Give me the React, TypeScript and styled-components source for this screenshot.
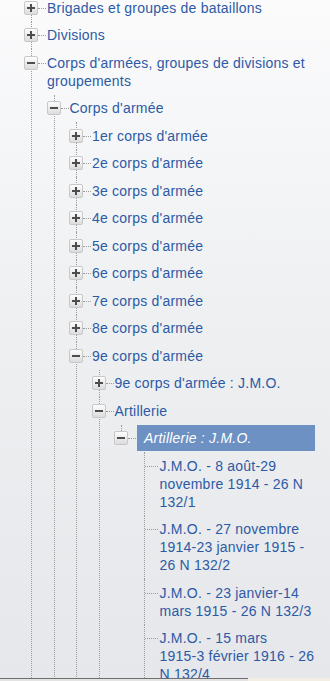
import React from 'react';
import styled, { createGlobalStyle } from 'styled-components';

type TreeNode = {
  label: string;
  open?: boolean;
  leaf?: boolean;
  selected?: boolean;
  last?: boolean;
  children?: TreeNode[];
};

const GlobalStyle = createGlobalStyle`
  html, body {
    margin: 0;
    padding: 0;
  }
  body {
    font-family: 'Liberation Sans', Arial, sans-serif;
  }
`;

const Page = styled.div`
  width: 330px;
  height: 681px;
  display: flex;
  flex-direction: column;
  overflow: hidden;
  background: linear-gradient(to bottom, #fbfbfc 0%, #eef0f2 45%, #e5e7ea 100%);
`;

const Scroller = styled.div`
  flex: 1;
  overflow: hidden;
  padding: 0 15px 0 0;
`;

const List = styled.ul<{ $indent: number; $offset?: number }>`
  list-style: none;
  margin: ${(p) => p.$offset || 0}px 0 0 0;
  padding: 0 0 0 ${(p) => p.$indent}px;
`;

const Item = styled.li<{ $last?: boolean }>`
  position: relative;
  &::before {
    content: '';
    position: absolute;
    left: 7px;
    top: 0;
    ${(p) => (p.$last ? 'height: 12px;' : 'bottom: 0;')}
    border-left: 1px dotted #9c9c9c;
  }
`;

const Row = styled.div`
  display: flex;
  align-items: flex-start;
  padding: 4.75px 0;
`;

const Toggle = styled.span`
  position: relative;
  z-index: 1;
  flex: none;
  box-sizing: border-box;
  width: 14px;
  height: 14px;
  margin-top: 2px;
  border: 1px solid #c8c8c8;
  border-radius: 2px;
  background: linear-gradient(to bottom, #fdfdfd, #dcdcdc);
  display: flex;
  align-items: center;
  justify-content: center;
`;

const Connector = styled.span`
  flex: none;
  width: 8px;
  height: 0;
  margin: 9px 1px 0 0;
  border-top: 1px dotted #9c9c9c;
`;

const LeafStub = styled.span`
  flex: none;
  width: 13px;
  height: 0;
  margin: 9px 2px 0 8px;
  border-top: 1px dotted #9c9c9c;
`;

const Label = styled.span<{ $selected?: boolean }>`
  flex: 1;
  min-width: 0;
  font-size: 14px;
  letter-spacing: 0.22px;
  line-height: 18px;
  color: ${(p) => (p.$selected ? '#ffffff' : '#2d5aa5')};
  font-style: ${(p) => (p.$selected ? 'italic' : 'normal')};
  background: ${(p) => (p.$selected ? '#6d91c3' : 'transparent')};
  padding: ${(p) => (p.$selected ? '4px 7px' : '0')};
  margin: ${(p) => (p.$selected ? '-4px 0' : '0')};
`;

const Footer = styled.div`
  flex: none;
  height: 3px;
  display: flex;
`;

const FooterLeft = styled.div`
  width: 248px;
  border-top: 1px solid #6f6f6f;
  background: #e3e3e3;
`;

const FooterRight = styled.div`
  flex: 1;
  background: #f3eee4;
`;

const Sign: React.FC<{ open?: boolean }> = ({ open }) => (
  <svg width="10" height="10" viewBox="0 0 10 10">
    <rect x="1" y="4" width="8" height="2" fill="#4d4d4d" />
    {!open && <rect x="4" y="1" width="2" height="8" fill="#4d4d4d" />}
  </svg>
);

// hyphens joining two words (1915-3) don't break the line, as in the source
const keepHyphens = (s: string) => s.replace(/(\S)-(\S)/g, '$1\u2011$2');

const corps = ['1er', '2e', '3e', '4e', '5e', '6e', '7e', '8e'].map((n) => ({
  label: `${n} corps d'armée`,
}));

const tree: TreeNode[] = [
  { label: 'Brigades et groupes de bataillons' },
  { label: 'Divisions' },
  {
    label: "Corps d'armées, groupes de divisions et groupements",
    open: true,
    children: [
      {
        label: "Corps d'armée",
        open: true,
        children: [
          ...corps,
          {
            label: "9e corps d'armée",
            open: true,
            children: [
              { label: "9e corps d'armée : J.M.O." },
              {
                label: 'Artillerie',
                open: true,
                children: [
                  {
                    label: 'Artillerie : J.M.O.',
                    open: true,
                    selected: true,
                    last: true,
                    children: [
                      { label: 'J.M.O. - 8 août-29 novembre 1914 - 26 N 132/1', leaf: true },
                      { label: 'J.M.O. - 27 novembre 1914-23 janvier 1915 - 26 N 132/2', leaf: true },
                      { label: 'J.M.O. - 23 janvier-14 mars 1915 - 26 N 132/3', leaf: true },
                      { label: 'J.M.O. - 15 mars 1915-3 février 1916 - 26 N 132/4', leaf: true },
                      { label: 'J.M.O. - 4 février 1916-31 décembre 1916 - 26 N 132/5', leaf: true, last: true },
                    ],
                  },
                ],
              },
              { label: 'Génie', last: true },
            ],
          },
          { label: "10e corps d'armée", last: true },
        ],
      },
      { label: 'Groupes de divisions', last: true },
    ],
  },
  { label: 'Régiments', last: true },
];

const TreeItem: React.FC<{ node: TreeNode }> = ({ node }) => (
  <Item $last={node.last}>
    <Row>
      {node.leaf ? (
        <LeafStub />
      ) : (
        <>
          <Toggle>
            <Sign open={node.open} />
          </Toggle>
          <Connector />
        </>
      )}
      <Label $selected={node.selected}>{keepHyphens(node.label)}</Label>
    </Row>
    {node.open && node.children && (
      <List $indent={22.5}>
        {node.children.map((child) => (
          <TreeItem key={child.label} node={child} />
        ))}
      </List>
    )}
  </Item>
);

export default function App() {
  return (
    <Page>
      <GlobalStyle />
      <Scroller>
        <List $indent={24} $offset={-6}>
          {tree.map((node) => (
            <TreeItem key={node.label} node={node} />
          ))}
        </List>
      </Scroller>
      <Footer>
        <FooterLeft />
        <FooterRight />
      </Footer>
    </Page>
  );
}
